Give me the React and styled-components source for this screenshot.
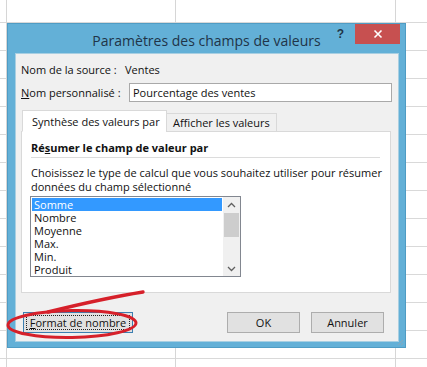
import React from 'react';
import styled, { createGlobalStyle } from 'styled-components';

const GlobalStyle = createGlobalStyle`
  html, body {
    margin: 0;
    padding: 0;
    background: #ffffff;
  }
  body {
    font-family: "Open Sans", "Noto Sans", "Liberation Sans", sans-serif;
  }
`;

const items = ['Somme', 'Nombre', 'Moyenne', 'Max.', 'Min.', 'Produit'];

const App = () => {
  return (
    <>
      <GlobalStyle />
      <Sheet>
        <Dialog>
          <TitleBar>
            <span />
            <Title>Paramètres des champs de valeurs</Title>
            <Controls>
              <Help>?</Help>
              <Close>
                <svg width="10" height="10" viewBox="0 0 10 10">
                  <path d="M1.5 1.5 L8.5 8.5 M8.5 1.5 L1.5 8.5" stroke="#fff" strokeWidth="1.6" />
                </svg>
              </Close>
            </Controls>
          </TitleBar>

          <Body>
            <FieldRow>
              <Label width={104}>Nom de la source :</Label>
              <Value>Ventes</Value>
            </FieldRow>
            <FieldRow $gap={5}>
              <Label width={108}>
                <u>N</u>om personnalisé :
              </Label>
              <TextInput>Pourcentage des ventes</TextInput>
            </FieldRow>

            <TabStrip>
              <Tab $active>Synthèse des valeurs par</Tab>
              <Tab>Afficher les valeurs</Tab>
            </TabStrip>

            <Panel>
              <GroupTitle>
                Ré<u>s</u>umer le champ de valeur par
              </GroupTitle>
              <Separator />
              <Hint>
                Choisissez le type de calcul que vous souhaitez utiliser pour résumer
                <br />
                données du champ sélectionné
              </Hint>
              <ListBox>
                <List>
                  {items.map((item, i) => (
                    <Item key={item} $selected={i === 0}>
                      {item}
                    </Item>
                  ))}
                </List>
                <ScrollBar>
                  <Arrow>
                    <svg width="9" height="6" viewBox="0 0 9 6">
                      <path d="M1 5 L4.5 1.5 L8 5" fill="none" stroke="#606060" strokeWidth="1.3" />
                    </svg>
                  </Arrow>
                  <Track>
                    <Thumb />
                  </Track>
                  <Arrow>
                    <svg width="9" height="6" viewBox="0 0 9 6">
                      <path d="M1 1 L4.5 4.5 L8 1" fill="none" stroke="#606060" strokeWidth="1.3" />
                    </svg>
                  </Arrow>
                </ScrollBar>
              </ListBox>
            </Panel>

            <ButtonRow>
              <Button $focused width={110}>
                <FocusRect>
                  <u>F</u>ormat de nombre
                </FocusRect>
              </Button>
              <Spacer />
              <Button width={73}>OK</Button>
              <Button width={73}>Annuler</Button>
            </ButtonRow>
          </Body>
          <Grip>
            <svg width="8" height="8" viewBox="0 0 8 8">
              <path d="M7 2 L2 7 M7 5 L5 7" stroke="#8aa6b8" strokeWidth="1" />
            </svg>
          </Grip>
        </Dialog>

        <Annotation width="427" height="367" viewBox="0 0 427 367">
          <ellipse cx="72" cy="324" rx="64" ry="13.5" fill="none" stroke="#d6202a" strokeWidth="3" transform="rotate(-1 72 324)" />
          <path d="M143 292 Q 105 298 48 312" fill="none" stroke="#d6202a" strokeWidth="3.4" strokeLinecap="round" />
        </Annotation>
      </Sheet>
    </>
  );
};

export default App;

const Sheet = styled.div`
  position: relative;
  width: 427px;
  height: 367px;
  box-sizing: border-box;
  padding: 23px 0 0 7px;
  background-color: #ffffff;
  background-image:
    linear-gradient(to right, transparent 6px, #d6d6d6 6px, #d6d6d6 7px, transparent 7px),
    linear-gradient(to right, transparent 175px, #d6d6d6 175px, #d6d6d6 176px, transparent 176px),
    linear-gradient(to right, transparent 395px, #d6d6d6 395px, #d6d6d6 396px, transparent 396px),
    repeating-linear-gradient(to bottom, transparent 0, transparent 27px, #d9d9d9 27px, #d9d9d9 28px);
  background-position: 0 0, 0 0, 0 0, 0 -5px;
  overflow: hidden;
`;

const Dialog = styled.div`
  position: relative;
  width: 399px;
  height: 325px;
  box-sizing: border-box;
  border: 1px solid #4f9cc4;
  background: #63b0d7;
  display: flex;
  flex-direction: column;
`;

const TitleBar = styled.div`
  height: 29px;
  flex-shrink: 0;
  display: grid;
  grid-template-columns: 1fr auto 1fr;
  align-items: start;
`;

const Title = styled.div`
  font-family: "Open Sans", "Noto Sans", sans-serif;
  font-size: 14px;
  color: #1f3448;
  line-height: 18px;
  padding-top: 8px;
  white-space: nowrap;
`;

const Controls = styled.div`
  display: flex;
  justify-content: flex-end;
  align-items: flex-start;
  margin-right: 5px;
`;

const Help = styled.div`
  font-family: "Liberation Sans", Arial, sans-serif;
  font-weight: bold;
  font-size: 12px;
  color: #1f3448;
  padding-top: 3px;
  margin-right: 11px;
`;

const Close = styled.div`
  width: 45px;
  height: 20px;
  background: #c75050;
  display: flex;
  align-items: center;
  justify-content: center;
`;

const Body = styled.div`
  flex: 1;
  margin: 0 6px 5px 7px;
  background: #f0f0f0;
  border: 1px solid #a8cfe2;
  box-sizing: border-box;
  padding: 6px 6px 0 5px;
  display: flex;
  flex-direction: column;
  font-size: 11px;
  color: #111;
`;

const FieldRow = styled.div`
  display: flex;
  align-items: center;
  flex-shrink: 0;
  height: ${(p) => (p.$gap ? 19 : 18)}px;
  margin-top: ${(p) => p.$gap || 0}px;
`;

const Label = styled.div`
  width: ${(p) => p.width}px;
  flex-shrink: 0;
  white-space: nowrap;
`;

const Value = styled.div`
  white-space: nowrap;
`;

const TextInput = styled.div`
  width: 264px;
  height: 19px;
  box-sizing: border-box;
  border: 1px solid #a9a9a9;
  background: #ffffff;
  padding: 0 3px;
  line-height: 17px;
  white-space: nowrap;
`;

const TabStrip = styled.div`
  display: flex;
  align-items: flex-end;
  flex-shrink: 0;
  margin-top: 8px;
  margin-left: 1px;
  position: relative;
  z-index: 1;
  margin-bottom: -1px;
`;

const Tab = styled.div`
  box-sizing: border-box;
  height: ${(p) => (p.$active ? 22 : 19)}px;
  padding: 0 ${(p) => (p.$active ? 9 : 6)}px;
  width: ${(p) => (p.$active ? 145 : 111)}px;
  border: 1px solid #d9d9d9;
  border-bottom: ${(p) => (p.$active ? '1px solid #ffffff' : '1px solid #d9d9d9')};
  background: ${(p) => (p.$active ? '#ffffff' : '#f0f0f0')};
  margin-left: ${(p) => (p.$active ? 0 : -1)}px;
  display: flex;
  align-items: center;
  white-space: nowrap;
`;

const Panel = styled.div`
  width: 370px;
  height: 162px;
  flex-shrink: 0;
  box-sizing: border-box;
  border: 1px solid #d9d9d9;
  background: #ffffff;
  padding: 9px 10px 0 9px;
  display: flex;
  flex-direction: column;
`;

const GroupTitle = styled.div`
  font-weight: bold;
  line-height: 14px;
  white-space: nowrap;
`;

const Separator = styled.div`
  height: 1px;
  background: #dcdcdc;
  margin: 2px 0 8px;
`;

const Hint = styled.div`
  line-height: 14px;
  white-space: nowrap;
`;

const ListBox = styled.div`
  margin-top: 2px;
  width: 211px;
  height: 81px;
  flex-shrink: 0;
  box-sizing: border-box;
  border: 1px solid #828790;
  background: #ffffff;
  display: flex;
  margin-left: -1px;
`;

const List = styled.div`
  flex: 1;
  padding: 1px 1px 0 1px;
`;

const Item = styled.div`
  height: 13px;
  line-height: 13px;
  padding-left: 2px;
  background: ${(p) => (p.$selected ? '#3399ff' : 'transparent')};
  color: ${(p) => (p.$selected ? '#ffffff' : '#111')};
`;

const ScrollBar = styled.div`
  width: 17px;
  background: #f0f0f0;
  display: flex;
  flex-direction: column;
`;

const Arrow = styled.div`
  height: 15px;
  display: flex;
  align-items: center;
  justify-content: center;
`;

const Track = styled.div`
  flex: 1;
  padding: 1px 1px;
`;

const Thumb = styled.div`
  height: 24px;
  background: #cdcdcd;
`;

const ButtonRow = styled.div`
  display: flex;
  flex-shrink: 0;
  gap: 11px;
  margin-top: 19px;
  padding-left: 2px;
  padding-right: 8px;
`;

const Spacer = styled.div`
  flex: 1;
`;

const Button = styled.div`
  width: ${(p) => p.width}px;
  height: 21px;
  box-sizing: border-box;
  border: 1px solid ${(p) => (p.$focused ? '#3c7fb1' : '#adadad')};
  background: #e1e1e1;
  display: flex;
  align-items: center;
  justify-content: center;
  padding: 2px;
  white-space: nowrap;
`;

const FocusRect = styled.div`
  flex: 1;
  align-self: stretch;
  border: 1px dotted #222;
  display: flex;
  align-items: center;
  justify-content: center;
`;

const Grip = styled.div`
  position: absolute;
  right: 1px;
  bottom: 1px;
  width: 8px;
  height: 8px;
  line-height: 0;
`;

const Annotation = styled.svg`
  position: absolute;
  left: 0;
  top: 0;
  pointer-events: none;
`;
